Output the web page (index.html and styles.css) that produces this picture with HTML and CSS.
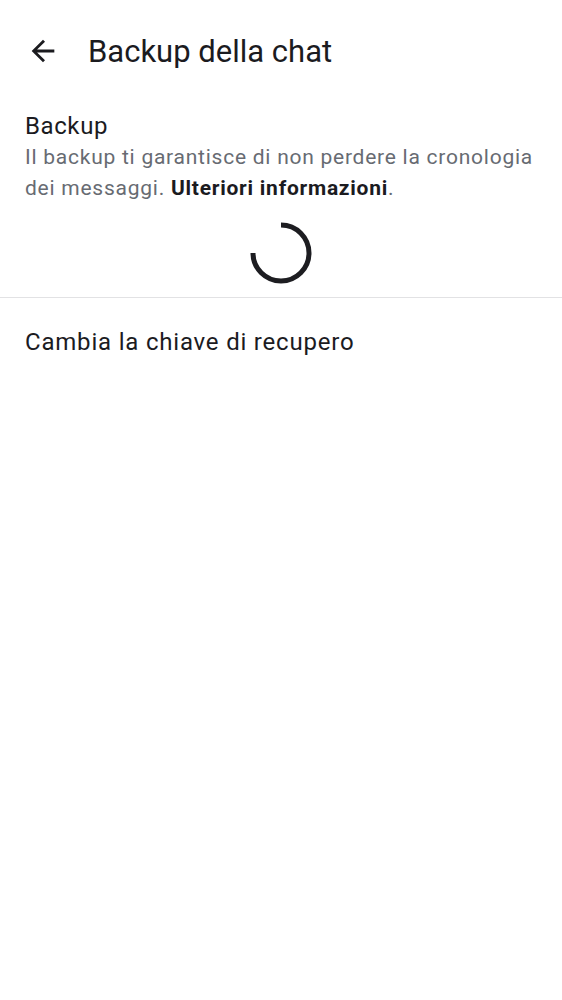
FILE: index.html
```html
<!DOCTYPE html>
<html lang="it">
<head>
<meta charset="utf-8">
<link rel="stylesheet" href="styles.css">
</head>
<body>
<header class="toolbar">
  <button class="back" aria-label="Indietro">
    <svg width="34" height="34" viewBox="0 0 24 24"><path d="M20 11H7.83l5.59-5.59L12 4l-8 8 8 8 1.41-1.41L7.83 13H20v-2z" fill="#1b1b1f"/></svg>
  </button>
  <h1 class="title">Backup della chat</h1>
</header>
<section class="backup">
  <div class="heading">Backup</div>
  <p class="desc">Il backup ti garantisce di non perdere la cronologia dei messaggi. <b>Ulteriori informazioni</b>.</p>
  <div class="spinner-wrap">
    <svg width="62" height="62" viewBox="0 0 62 62"><path d="M31 3 A28 28 0 1 1 3 31" fill="none" stroke="#1d1d21" stroke-width="5"/></svg>
  </div>
</section>
<hr class="divider">
<div class="item">Cambia la chiave di recupero</div>
</body>
</html>
```
FILE: styles.css
```css
html, body {
  margin: 0;
  padding: 0;
  background: #fff;
  font-family: Roboto, "Noto Sans", sans-serif;
  color: #1b1b1f;
}
.toolbar {
  box-sizing: border-box;
  display: flex;
  align-items: center;
  height: 100px;
  padding: 2px 0 0 26px;
}
.back {
  border: 0;
  background: none;
  padding: 0;
  width: 34px;
  height: 34px;
  display: flex;
  margin-right: 28px;
}
.title {
  margin: 0;
  font-size: 31px;
  font-weight: 400;
  letter-spacing: 0;
}
.backup {
  padding: 10px 25px 0;
}
.heading {
  font-size: 24px;
  line-height: 32px;
  letter-spacing: 0.6px;
}
.desc {
  margin: 0;
  font-size: 21px;
  line-height: 31px;
  letter-spacing: 0.75px;
  color: #676b72;
}
.desc b {
  color: #1b1b1f;
  font-weight: 700;
}
.spinner-wrap {
  display: flex;
  justify-content: center;
  padding: 17.5px 0 13.5px;
}
.spinner-wrap svg {
  display: block;
}
.divider {
  border: 0;
  border-top: 1px solid #e2e2e4;
  margin: 0;
}
.item {
  padding: 28px 25px;
  font-size: 24px;
  line-height: 32px;
  letter-spacing: 0.8px;
}
```
